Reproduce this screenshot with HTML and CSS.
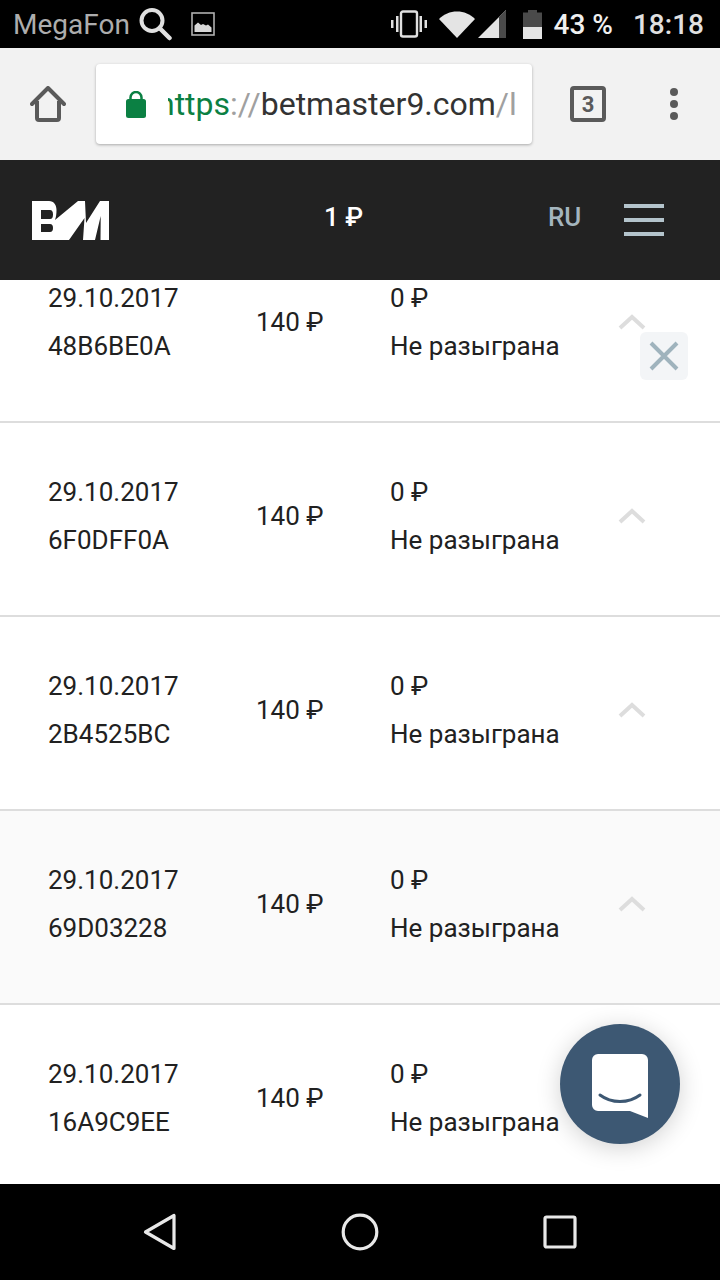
FILE: index.html
```html
<!DOCTYPE html>
<html lang="ru">
<head>
  <meta charset="UTF-8" />
  <meta name="viewport" content="width=device-width, initial-scale=1.0" />
  <title>Betmaster</title>
  <link rel="stylesheet" href="styles.css">
</head>
<body>
  <div class="phone">
    <div class="status-bar">
      <span class="carrier">MegaFon</span>
      <svg class="ic-search" width="34" height="34" viewBox="0 0 34 34"><circle cx="14" cy="13.5" r="10.5" fill="none" stroke="#e0e0e0" stroke-width="4"/><path d="M21.5 21l10 10" stroke="#e0e0e0" stroke-width="4.5" stroke-linecap="round"/></svg>
      <svg class="ic-image" width="24" height="24" viewBox="0 0 24 24"><rect x="1" y="1" width="22" height="22" fill="none" stroke="#b0b0b0" stroke-width="1.6"/><path d="M3.5 20v-6.5l3.500-3 3 2.500 2-1 3 1.500 2-1 3.500 3V20z" fill="#d8d8d8"/></svg>
      <div class="status-right">
        <svg class="ic-vibrate" width="36" height="28" viewBox="0 0 36 28"><rect x="10" y="1.500" width="16" height="25" rx="2" fill="none" stroke="#e0e0e0" stroke-width="2.400"/><path d="M5 6h2.500v16H5zM28.500 6H31v16h-2.500zM0 10h2.500v8H0zM33.500 10H36v8h-2.500z" fill="#e0e0e0"/></svg>
        <svg class="ic-wifi" width="36" height="28" viewBox="0 0 36 28"><path d="M0 9C5 4 11 1.500 18 1.500S31 4 36 9L18 28z" fill="#e4e4e4"/></svg>
        <svg class="ic-signal" width="28" height="28" viewBox="0 0 28 28"><path d="M0 28L28 0v28z" fill="#e4e4e4"/><path d="M21 7l7-7v28h-7z" fill="#4a4a4a"/></svg>
        <svg class="ic-battery" width="19" height="29" viewBox="0 0 19 29"><path d="M5 0h9v2.500h5V17H0V2.500h5z" fill="#4a4a4a"/><path d="M0 17h19v12H0z" fill="#e4e4e4"/></svg>
        <span class="battery-level">43 %</span>
        <span class="clock">18:18</span>
      </div>
    </div>

    <div class="browser-bar">
      <svg class="ic-home" width="36" height="36" viewBox="0 0 36 36"><path d="M2 18L18 2l16 16" fill="none" stroke="#5a5a5a" stroke-width="4" stroke-linecap="round" stroke-linejoin="round"/><path d="M7 15v17a2 2 0 0 0 2 2h18a2 2 0 0 0 2-2V15" fill="none" stroke="#5a5a5a" stroke-width="4"/></svg>
      <div class="url-box">
        <svg class="ic-lock" width="20" height="27" viewBox="0 0 20 27"><path d="M4.500 10V6.500a5.500 5.500 0 0 1 11 0V10" fill="none" stroke="#0b8043" stroke-width="2.500"/><rect y="8" width="20" height="19" rx="2.500" fill="#0b8043"/></svg>
        <div class="url-clip"><span class="url-text"><span class="url-scheme">https</span><span class="url-dim">://</span>betmaster9.com<span class="url-dim">/l</span></span></div>
      </div>
      <div class="tabs-btn">3</div>
      <div class="menu-dots"><i></i><i></i><i></i></div>
    </div>

    <header class="site-header">
      <svg class="logo" width="77" height="39" viewBox="0 0 77 39"><path fill="#fff" fill-rule="evenodd" d="M0 0H17C22 0 24.500 4 24.500 9C24.500 13 24 16 23 19L46 0H53L54 22L68 0H77V39H68.500L68.700 15L63 39H51L52.500 17L37 39H0ZM9 9V18H18C20 18 21 16.500 21 13.500S20 9 18 9ZM9 23V31H18C20 31 21 29.500 21 27S20 23 18 23Z"/></svg>
      <span class="balance">1 ₽</span>
      <span class="lang">RU</span>
      <div class="burger"><i></i><i></i><i></i></div>
    </header>

    <main class="tickets">
      <div class="ticket ticket-first">
        <div class="col-date"><div>29.10.2017</div><div>48B6BE0A</div></div>
        <div class="col-price">140 ₽</div>
        <div class="col-win"><div>0 ₽</div><div>Не разыграна</div></div>
        <svg class="chevron" width="28" height="16" viewBox="0 0 28 16"><path d="M2 14L14 3l12 11" fill="none" stroke="#ddd" stroke-width="4"/></svg>
      </div>
      <div class="ticket">
        <div class="col-date"><div>29.10.2017</div><div>6F0DFF0A</div></div>
        <div class="col-price">140 ₽</div>
        <div class="col-win"><div>0 ₽</div><div>Не разыграна</div></div>
        <svg class="chevron" width="28" height="16" viewBox="0 0 28 16"><path d="M2 14L14 3l12 11" fill="none" stroke="#ddd" stroke-width="4"/></svg>
      </div>
      <div class="ticket">
        <div class="col-date"><div>29.10.2017</div><div>2B4525BC</div></div>
        <div class="col-price">140 ₽</div>
        <div class="col-win"><div>0 ₽</div><div>Не разыграна</div></div>
        <svg class="chevron" width="28" height="16" viewBox="0 0 28 16"><path d="M2 14L14 3l12 11" fill="none" stroke="#ddd" stroke-width="4"/></svg>
      </div>
      <div class="ticket ticket-hover">
        <div class="col-date"><div>29.10.2017</div><div>69D03228</div></div>
        <div class="col-price">140 ₽</div>
        <div class="col-win"><div>0 ₽</div><div>Не разыграна</div></div>
        <svg class="chevron" width="28" height="16" viewBox="0 0 28 16"><path d="M2 14L14 3l12 11" fill="none" stroke="#ddd" stroke-width="4"/></svg>
      </div>
      <div class="ticket">
        <div class="col-date"><div>29.10.2017</div><div>16A9C9EE</div></div>
        <div class="col-price">140 ₽</div>
        <div class="col-win"><div>0 ₽</div><div>Не разыграна</div></div>
      </div>
    </main>

    <div class="close-btn">
      <svg width="32" height="32" viewBox="0 0 32 32"><path d="M3 3l26 26M29 3L3 29" stroke="#9fb3bd" stroke-width="4"/></svg>
    </div>

    <div class="chat-btn">
      <svg width="56" height="64" viewBox="0 0 56 64"><path fill="#fff" d="M6 0h44a6 6 0 0 1 6 6v58l-18-7H6a6 6 0 0 1-6-6V6a6 6 0 0 1 6-6z"/><path d="M8 41c6 4.500 13 6.500 20 6.500S42 45.500 48 41" fill="none" stroke="#3d5873" stroke-width="3" stroke-linecap="round"/></svg>
    </div>

    <nav class="nav-bar">
      <svg width="36" height="40" viewBox="0 0 36 40"><path d="M32 3.500v33L3.500 20z" fill="none" stroke="#e8e8e8" stroke-width="3.200" stroke-linejoin="round"/></svg>
      <svg width="38" height="38" viewBox="0 0 38 38"><circle cx="19" cy="19" r="16.800" fill="none" stroke="#e8e8e8" stroke-width="3.200"/></svg>
      <svg class="nav-square" width="34" height="34" viewBox="0 0 34 34"><rect x="2" y="2" width="30" height="30" rx="1.500" fill="none" stroke="#e8e8e8" stroke-width="3.200"/></svg>
    </nav>
  </div>
</body>
</html>
```

FILE: styles.css
```css
* {
  box-sizing: border-box;
}
body {
  margin: 0;
  background-color: #fff;
  font-family: Roboto, "Liberation Sans", sans-serif;
  color: #212121;
}
.phone {
  position: relative;
  width: 720px;
  height: 1280px;
  display: flex;
  flex-direction: column;
  overflow: hidden;
}

/* status bar */
.status-bar {
  flex: 0 0 48px;
  display: flex;
  align-items: center;
  background-color: #000;
  padding: 0 16px 0 13px;
}
.carrier {
  font-size: 28px;
  color: #adadad;
}
.ic-search {
  margin-left: 8px;
}
.ic-image {
  margin-left: 19px;
}
.status-right {
  margin-left: auto;
  display: flex;
  align-items: center;
}
.ic-vibrate {
  margin-right: 12px;
}
.ic-wifi {
  margin-right: 3px;
}
.ic-signal {
  margin-right: 17px;
}
.ic-battery {
  margin-right: 12px;
}
.battery-level {
  font-size: 28px;
  font-weight: 500;
  color: #f0f0f0;
  margin-right: 20px;
}
.clock {
  font-size: 28px;
  font-weight: 500;
  color: #e0e0e0;
}

/* browser toolbar */
.browser-bar {
  flex: 0 0 112px;
  display: flex;
  align-items: center;
  background-color: #f2f2f2;
  padding-left: 30px;
}
.url-box {
  width: 436px;
  height: 80px;
  margin-left: 30px;
  padding: 0 16px 0 30px;
  display: flex;
  align-items: center;
  background-color: #fff;
  border-radius: 4px;
  box-shadow: 0 1px 3px rgba(0,0,0,0.3);
}
.ic-lock {
  flex: none;
}
.url-clip {
  flex: 1;
  margin-left: 22px;
  overflow: hidden;
  white-space: nowrap;
}
.url-text {
  display: block;
  margin-left: -11px;
  font-size: 32px;
  line-height: 44px;
  color: #333;
}
.url-scheme {
  color: #0b8043;
}
.url-dim {
  color: #a0a0a0;
}
.tabs-btn {
  width: 36px;
  height: 36px;
  margin-left: 38px;
  display: flex;
  align-items: center;
  justify-content: center;
  border: 4px solid #5a5a5a;
  border-radius: 4px;
  font-size: 22px;
  font-weight: 700;
  color: #5a5a5a;
}
.menu-dots {
  margin-left: 64px;
  display: flex;
  flex-direction: column;
  gap: 4px;
}
.menu-dots i {
  display: block;
  width: 8px;
  height: 8px;
  border-radius: 50%;
  background-color: #5a5a5a;
}

/* site header */
.site-header {
  flex: 0 0 120px;
  display: flex;
  align-items: center;
  background-color: #222;
  padding-left: 32px;
}
.logo {
  flex: none;
}
.balance {
  margin-left: 215px;
  width: 224px;
  font-size: 26px;
  font-weight: 500;
  color: #fff;
  margin-top: -6px;
}
.lang {
  font-size: 26px;
  font-weight: 500;
  color: #a4b5be;
  margin-top: -6px;
}
.burger {
  margin-left: 43px;
  display: flex;
  flex-direction: column;
  gap: 10px;
  margin-top: -1px;
}
.burger i {
  display: block;
  width: 40px;
  height: 4px;
  background-color: #b4c4cc;
}

/* ticket list */
.tickets {
  flex: 1;
  min-height: 0;
  overflow: hidden;
  background-color: #fff;
}
.ticket {
  position: relative;
  height: 194px;
  display: flex;
  align-items: center;
  padding: 0 0 6px 48px;
  border-bottom: 2px solid #ddd;
  font-size: 26px;
  line-height: 48px;
  color: #212121;
}
.ticket-first {
  margin-top: -51px;
}
.ticket-hover {
  background-color: #fafafa;
}
.col-date {
  width: 208px;
}
.col-price {
  width: 134px;
}
.col-win {
  width: 220px;
}
.chevron {
  margin-left: 8px;
}

/* overlays */
.close-btn {
  position: absolute;
  left: 640px;
  top: 332px;
  width: 48px;
  height: 48px;
  display: flex;
  align-items: center;
  justify-content: center;
  background-color: #f3f5f7;
  border-radius: 6px;
}
.chat-btn {
  position: absolute;
  left: 560px;
  top: 1024px;
  width: 120px;
  height: 120px;
  display: flex;
  align-items: center;
  justify-content: center;
  padding-top: 4px;
  background-color: #3d5873;
  border-radius: 50%;
  box-shadow: 0 4px 24px rgba(0,0,0,0.18);
}

/* android nav */
.nav-bar {
  flex: 0 0 96px;
  display: flex;
  align-items: center;
  background-color: #000;
  position: relative;
  z-index: 1;
  padding-left: 142px;
  gap: 163px;
}
.nav-square {
  margin-left: 1px;
}
```
